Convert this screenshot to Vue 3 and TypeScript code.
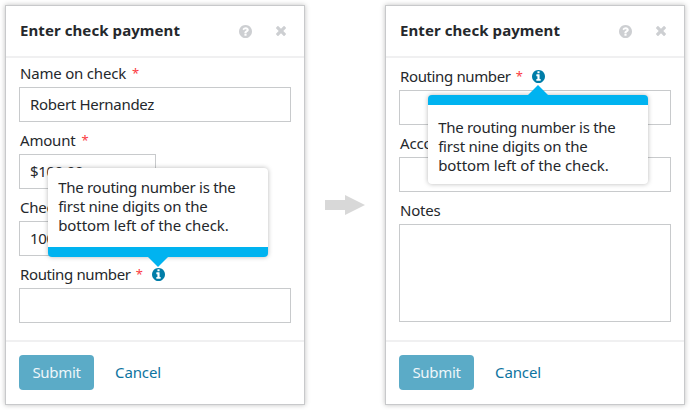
<script setup lang="ts">
interface Field {
  label: string
  name: string
  value?: string
  required?: boolean
  size?: 'short' | 'tall'
  tip?: 'above' | 'below'
}

interface Panel {
  id: string
  fields: Field[]
}

const tipLines: string[] = [
  'The routing number is the',
  'first nine digits on the',
  'bottom left of the check.',
]

const panels: Panel[] = [
  {
    id: 'before',
    fields: [
      { label: 'Name on check', name: 'name', value: 'Robert Hernandez', required: true },
      { label: 'Amount', name: 'amount', value: '$100.00', required: true, size: 'short' },
      { label: 'Check', name: 'check', value: '100', size: 'short' },
      { label: 'Routing number', name: 'routing', required: true, tip: 'above' },
    ],
  },
  {
    id: 'after',
    fields: [
      { label: 'Routing number', name: 'routing', required: true, tip: 'below' },
      { label: 'Account', name: 'account' },
      { label: 'Notes', name: 'notes', size: 'tall' },
    ],
  },
]
</script>

<template>
  <main class="stage">
    <template v-for="(panel, index) in panels" :key="panel.id">
      <svg v-if="index > 0" class="arrow" viewBox="0 0 40 20">
        <path d="M0 5h20V0l20 10-20 10v-5H0z" />
      </svg>
      <section class="panel" :class="panel.id">
        <header class="head">
          <h1 class="title">Enter check payment</h1>
          <svg class="icon help" viewBox="128 128 1536 1536">
            <path d="M1024 1376v-192q0-14-9-23t-23-9h-192q-14 0-23 9t-9 23v192q0 14 9 23t23 9h192q14 0 23-9t9-23zm256-672q0-88-55.5-163t-138.5-116-170-41q-243 0-371 213-15 24 8 42l132 100q7 6 19 6 16 0 25-12 53-68 86-92 34-24 86-24 48 0 85.5 26t37.5 59q0 38-20 61t-68 45q-63 28-115.5 86.5t-52.5 125.5v36q0 14 9 23t23 9h192q14 0 23-9t9-23q0-19 21.5-49.5t54.5-49.5q32-18 49-28.5t46-35 44.5-48 28-60.5 12.5-81zm384 192q0 209-103 385.5t-279.5 279.5-385.5 103-385.5-103-279.5-279.5-103-385.5 103-385.5 279.5-279.5 385.5-103 385.5 103 279.5 279.5 103 385.5z" />
          </svg>
          <svg class="icon close" viewBox="302 366 1188 1188">
            <path d="M1490 1322q0 40-28 68l-136 136q-28 28-68 28t-68-28l-294-294-294 294q-28 28-68 28t-68-28l-136-136q-28-28-28-68t28-68l294-294-294-294q-28-28-28-68t28-68l136-136q28-28 68-28t68 28l294 294 294-294q28-28 68-28t68 28l136 136q28 28 28 68t-28 68l-294 294 294 294q28 28 28 68z" />
          </svg>
        </header>
        <div class="body">
          <div v-for="field in panel.fields" :key="field.name" class="field" :class="field.name">
            <div class="label">
              <span class="text">{{ field.label }}</span>
              <span v-if="field.required" class="star">*</span>
              <span v-if="field.tip" class="info">
                <svg class="info-icon" viewBox="128 128 1536 1536">
                  <path d="M1152 1376v-160q0-14-9-23t-23-9h-96v-512q0-14-9-23t-23-9h-320q-14 0-23 9t-9 23v160q0 14 9 23t23 9h96v320h-96q-14 0-23 9t-9 23v160q0 14 9 23t23 9h448q14 0 23-9t9-23zm-128-896v-160q0-14-9-23t-23-9h-192q-14 0-23 9t-9 23v160q0 14 9 23t23 9h192q14 0 23-9t9-23zm640 416q0 209-103 385.5t-279.5 279.5-385.5 103-385.5-103-279.5-279.5-103-385.5 103-385.5 279.5-279.5 385.5-103 385.5 103 279.5 279.5 103 385.5z" />
                </svg>
                <span class="tip" :class="field.tip">
                  <span v-for="line in tipLines" :key="line" class="line">{{ line }}</span>
                </span>
              </span>
            </div>
            <div class="box" :class="field.size"><span class="value">{{ field.value }}</span></div>
          </div>
        </div>
        <footer class="foot">
          <button type="button" class="submit">Submit</button>
          <a class="cancel">Cancel</a>
        </footer>
      </section>
    </template>
  </main>
</template>

<style>
body {
  background: #fff;
}
</style>

<style scoped>
.stage {
  box-sizing: border-box;
  width: 690px;
  height: 410px;
  padding: 5px;
  display: flex;
  align-items: center;
  justify-content: space-between;
  overflow: hidden;
  font: 15px/19px "Noto Sans", "Open Sans", sans-serif;
  color: #25282c;
}
.arrow {
  width: 40px;
  height: 20px;
  fill: #d8d8d8;
}
.panel {
  box-sizing: border-box;
  width: 300px;
  height: 400px;
  display: flex;
  flex-direction: column;
  background: #fff;
  border: 1px solid #c8c9cb;
  box-shadow: 0 0 5px rgba(0, 0, 0, 0.25);
}
.head {
  box-sizing: border-box;
  height: 52px;
  padding: 0 18px 0 14px;
  display: flex;
  align-items: center;
  border-bottom: 2px solid #f0f0f1;
}
.title {
  margin: 0 auto 0 0;
  padding-bottom: 2px;
  font-size: 15px;
  line-height: 20px;
  font-weight: 700;
  letter-spacing: 0.08px;
}
.icon {
  fill: #cdcfd2;
}
.help {
  width: 13px;
  height: 13px;
  margin-right: 24px;
}
.close {
  width: 10px;
  height: 10px;
}
.body {
  flex: 1;
  padding: 3px 13px 0;
}
.after .body {
  padding-top: 6px;
}
.field + .field {
  margin-top: 6px;
}
.label {
  height: 24px;
  padding: 0 0 2px 1px;
  display: flex;
  align-items: center;
  line-height: 24px;
}
.text {
  letter-spacing: -0.2px;
}
.routing .text {
  letter-spacing: -0.37px;
}
.star {
  margin-left: 6px;
  color: #fb3b42;
  font-size: 13px;
}
.routing .star {
  width: 7px;
  margin-left: 5px;
}
.info {
  position: relative;
  width: 13px;
  height: 13px;
  margin-left: 9px;
}
.info-icon {
  display: block;
  width: 13px;
  height: 13px;
  fill: #007da8;
}
.tip {
  position: absolute;
  z-index: 2;
  left: 50%;
  box-sizing: border-box;
  width: 220px;
  height: 89px;
  padding: 10px 10px 0;
  transform: translateX(-50%);
  display: flex;
  flex-direction: column;
  background: #fff;
  border-radius: 4px;
  box-shadow: 0 0 5px rgba(0, 0, 0, 0.28);
  line-height: 19px;
  white-space: nowrap;
}
.tip.above {
  bottom: 24px;
  border-bottom: 10px solid #00b3f0;
}
.tip.below {
  top: 25px;
  padding-top: 13px;
  border-top: 10px solid #00b3f0;
}
.tip::after {
  content: "";
  position: absolute;
  left: 100px;
  border: 10px solid transparent;
}
.tip.above::after {
  top: 100%;
  margin-top: 10px;
  border-bottom-width: 0;
  border-top-color: #00b3f0;
}
.tip.below::after {
  bottom: 100%;
  margin-bottom: 10px;
  border-top-width: 0;
  border-bottom-color: #00b3f0;
}
.line {
  letter-spacing: -0.28px;
}
.line:nth-child(2) {
  letter-spacing: -0.22px;
}
.line:last-child {
  letter-spacing: -0.07px;
}
.box {
  box-sizing: border-box;
  height: 35px;
  padding-left: 10px;
  display: flex;
  align-items: center;
  border: 1px solid #c8cacc;
  letter-spacing: -0.3px;
}
.short {
  width: 137px;
}
.tall {
  height: 98px;
}
.foot {
  box-sizing: border-box;
  height: 64px;
  padding: 13px 13px 0;
  display: flex;
  align-items: flex-start;
  border-top: 2px solid #f0f0f1;
}
.submit {
  width: 75px;
  height: 35px;
  padding: 0;
  border: 0;
  border-radius: 4px;
  background: #5babc7;
  color: #eef6fa;
  font: inherit;
  letter-spacing: -0.3px;
}
.cancel {
  margin-left: 21px;
  line-height: 35px;
  color: #0e74a0;
  letter-spacing: -0.1px;
}
</style>
